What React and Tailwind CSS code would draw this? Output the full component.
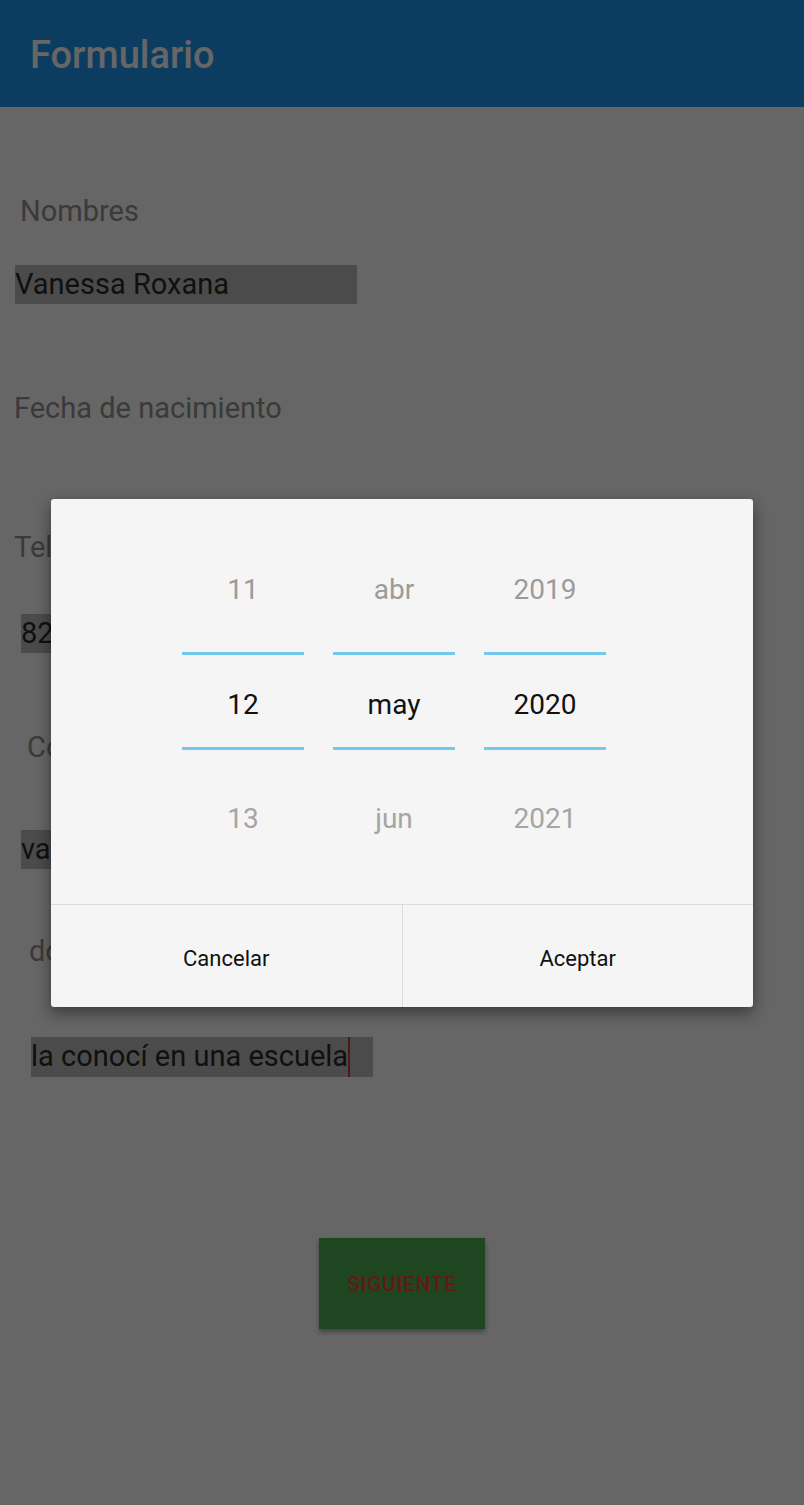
import { useState } from "react";

const font = { fontFamily: "Roboto, 'Noto Sans', sans-serif" };

function Label({ children, className = "" }) {
  return <p className={`h-[28px] text-[29px] leading-[28px] text-[#929292] ${className}`}>{children}</p>;
}

function Field({ value, className = "", w = "w-[342px]", cursor = false }) {
  return (
    <div className={`${w} h-[39px] bg-[#bcbcbc] text-[29px] leading-[39px] text-[#2a2a2a] whitespace-nowrap overflow-hidden flex ${className}`}>
      <span>{value}</span>
      {cursor && <span className="w-[2px] h-full bg-[#c83a3a]" />}
    </div>
  );
}

function PickerColumn({ prev, current, next }) {
  return (
    <div className="w-[122px] flex flex-col items-center">
      <div className="mt-[77px] h-[28px] text-[28px] leading-[28px] text-[#9b9b9b]">{prev}</div>
      <div className="mt-[48px] h-[3px] w-full bg-[#71c9ee]" />
      <div className="mt-[36px] h-[28px] text-[28px] leading-[28px] text-[#111111]">{current}</div>
      <div className="mt-[28px] h-[3px] w-full bg-[#71c9ee]" />
      <div className="mt-[55px] h-[28px] text-[28px] leading-[28px] text-[#a5a5a5]">{next}</div>
    </div>
  );
}

export default function App() {
  const [open, setOpen] = useState(true);

  return (
    <div className="relative min-h-screen h-[1505px] bg-white overflow-hidden" style={font}>
      {/* APP BAR */}
      <header className="h-[107px] bg-[#2196f3] flex items-center pl-[30px] pt-[4px]">
        <h1 className="text-[38px] font-medium text-white">Formulario</h1>
      </header>

      {/* FORM */}
      <main className="flex flex-col">
        <Label className="mt-[90px] ml-[20px]">Nombres</Label>
        <Field value="Vanessa Roxana" className="mt-[40px] ml-[15px]" />

        <Label className="mt-[90px] ml-[14px]">Fecha de nacimiento</Label>

        <Label className="mt-[111px] ml-[14px]">Teléfono</Label>
        <Field value="8291234567" className="mt-[53px] ml-[21px]" w="w-[300px]" />

        <Label className="mt-[80px] ml-[27px]">Correo</Label>
        <Field value="vanessa.roxana@gmail.com" className="mt-[69px] ml-[21px]" w="w-[400px]" />

        <Label className="mt-[68px] ml-[29px]">dónde la conociste</Label>
        <Field value="la conocí en una escuela" className="mt-[72px] ml-[31px] h-[40px]" cursor />

        <div className="mt-[161px] flex justify-center">
          <button className="w-[166px] h-[91px] bg-[#4caf50] text-[#f44336] text-[21px] font-medium tracking-[0.03em] pt-[2px] shadow-[0_3px_5px_rgba(0,0,0,0.35)]">
            SIGUIENTE
          </button>
        </div>
      </main>

      {/* DIALOG */}
      {open && (
        <div className="absolute inset-0 bg-black/60 flex items-center justify-center">
          <div className="w-[702px] h-[508px] bg-[#f5f5f5] rounded-[3px] shadow-[0_6px_16px_rgba(0,0,0,0.45)] flex flex-col">
            <div className="flex-1 flex justify-center pr-[16px] gap-[29px]">
              <PickerColumn prev="11" current="12" next="13" />
              <PickerColumn prev="abr" current="may" next="jun" />
              <PickerColumn prev="2019" current="2020" next="2021" />
            </div>
            <div className="h-[103px] border-t border-[#dcdcdc] flex text-[22px] text-[#111111]">
              <button onClick={() => setOpen(false)} className="flex-1 pt-[5px] border-r border-[#dcdcdc]">Cancelar</button>
              <button onClick={() => setOpen(false)} className="flex-1 pt-[5px]">Aceptar</button>
            </div>
          </div>
        </div>
      )}
    </div>
  );
}
